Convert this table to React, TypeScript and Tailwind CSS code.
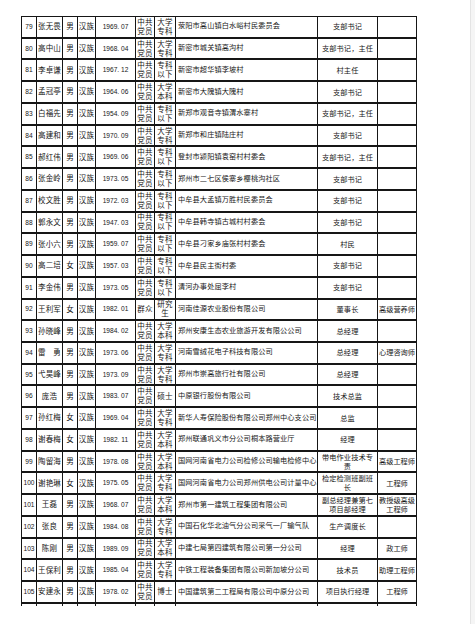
const ROWS: [string, string, string, string, string, string, string, string, string, string][] = [
  ["79", "张无畏", "男", "汉族", "1969. 07", "中共\n党员", "大学\n专科", "荥阳市高山镇白水峪村民委员会", "支部书记", ""],
  ["80", "高中山", "男", "汉族", "1968. 04", "中共\n党员", "大学\n专科", "新密市城关镇高沟村", "支部书记，主任", ""],
  ["81", "李卓谦", "男", "汉族", "1967. 12", "中共\n党员", "专科\n以下", "新密市超华镇李坡村", "村主任", ""],
  ["82", "孟冠亭", "男", "汉族", "1964. 06", "中共\n党员", "大学\n本科", "新密市大隗镇大隗村", "支部书记", ""],
  ["83", "白福先", "男", "汉族", "1954. 09", "中共\n党员", "专科\n以下", "新郑市观音寺镇渭水寨村", "支部书记，主任", ""],
  ["84", "高建和", "男", "汉族", "1970. 09", "中共\n党员", "大学\n专科", "新郑市和庄镇陆庄村", "支部书记", ""],
  ["85", "郝红伟", "男", "汉族", "1969. 06", "中共\n党员", "专科\n以下", "登封市颍阳镇袁窑村村委会", "支部书记，主任", ""],
  ["86", "张金岭", "男", "汉族", "1973. 05", "中共\n党员", "专科\n以下", "郑州市二七区侯寨乡樱桃沟社区", "支部书记", ""],
  ["87", "校文胜", "男", "汉族", "1972. 03", "中共\n党员", "专科\n以下", "中牟县大孟镇万胜村民委员会", "支部书记", ""],
  ["88", "郭永文", "男", "汉族", "1947. 03", "中共\n党员", "专科\n以下", "中牟县韩寺镇古城村村委会", "支部书记", ""],
  ["89", "张小六", "男", "汉族", "1959. 07", "中共\n党员", "专科\n以下", "中牟县刁家乡庙张村村委会", "村民", ""],
  ["90", "高二培", "女", "汉族", "1957. 03", "中共\n党员", "专科\n以下", "中牟县民主街村委", "支部书记", ""],
  ["91", "李金伟", "男", "汉族", "1973. 05", "中共\n党员", "专科\n以下", "清河办事处屈李村", "支部书记", ""],
  ["92", "王利军", "女", "汉族", "1982. 01", "群众", "研究\n生", "河南佳源农业股份有限公司", "董事长", "高级营养师"],
  ["93", "孙晓峰", "男", "汉族", "1984. 02", "中共\n党员", "大学\n本科", "郑州安康生态农业旅游开发有限公公司", "总经理", ""],
  ["94", "雷　勇", "男", "汉族", "1973. 06", "中共\n党员", "大学\n专科", "河南雪绒花电子科技有限公司", "总经理", "心理咨询师"],
  ["95", "弋昊峰", "男", "汉族", "1973. 09", "中共\n党员", "大学\n专科", "郑州市崇高旅行社有限公司", "总经理", ""],
  ["96", "庞浩", "男", "汉族", "1983. 07", "中共\n党员", "硕士", "中原银行股份有限公司", "技术总监", ""],
  ["97", "孙红梅", "女", "汉族", "1969. 04", "中共\n党员", "大学\n专科", "新华人寿保险股份有限公司郑州中心支公司", "总监", ""],
  ["98", "谢春梅", "女", "汉族", "1982. 11", "中共\n党员", "大学\n本科", "郑州联通巩义市分公司桐本路营业厅", "经理", ""],
  ["99", "陶留海", "男", "汉族", "1978. 08", "中共\n党员", "大学\n本科", "国网河南省电力公司检修公司输电检修中心", "带电作业技术专\n责", "高级工程师"],
  ["100", "谢艳琳", "女", "汉族", "1975. 05", "中共\n党员", "大学\n专科", "国网河南省电力公司郑州供电公司计量中心", "检定检测班副班\n长", "工程师"],
  ["101", "王磊", "男", "汉族", "1968. 07", "中共\n党员", "大学\n本科", "郑州市第一建筑工程集团有限公司", "副总经理兼第七\n项目部经理", "教授级高级\n工程师"],
  ["102", "张良", "男", "汉族", "1984. 08", "中共\n党员", "大学\n专科", "中国石化华北油气分公司采气一厂输气队", "生产调度长", ""],
  ["103", "陈刚", "男", "汉族", "1989. 09", "中共\n党员", "大学\n本科", "中建七局第四建筑有限公司第一分公司", "经理", "政工师"],
  ["104", "王保利", "男", "汉族", "1985. 04", "中共\n党员", "大学\n专科", "中铁工程装备集团有限公司新加坡分公司", "技术员", "助理工程师"],
  ["105", "安建永", "男", "汉族", "1978. 02", "中共\n党员", "博士", "中国建筑第二工程局有限公司中原分公司", "项目执行经理", "工程师"],
];

const GRID = "grid grid-cols-[15px_26px_15px_18px_40px_19px_21px_142px_60px_39px]";
const CELL = "flex items-center justify-center border-r border-[#161616] text-center whitespace-pre-line overflow-hidden";

export default function App() {
  return (
    <div
      className="flex w-[475px] h-[624px] bg-white text-[#161616]"
      style={{ fontFamily: '"Liberation Sans", "Noto Sans CJK SC", sans-serif' }}
    >
      <div className="flex-1 pt-[16px] pl-[21px]">
        <div className="w-[396px] border-t border-l border-[#161616]">
          {ROWS.map((r) => (
            <div key={r[0]} className={`${GRID} h-[21.74px] border-b-2 border-[#161616]`}>
              <div className={`${CELL} text-[6.6px]`}>{r[0]}</div>
              <div className={`${CELL} text-[7.5px] tracking-[0.2px]`}>{r[1]}</div>
              <div className={`${CELL} text-[7.5px]`}>{r[2]}</div>
              <div className={`${CELL} text-[7.5px] tracking-[0.2px]`}>{r[3]}</div>
              <div className={`${CELL} text-[6.6px]`}>{r[4]}</div>
              <div className={`${CELL} text-[7.5px] leading-[9px] tracking-[0.2px]`}>{r[5]}</div>
              <div className={`${CELL} text-[7.5px] leading-[9px] tracking-[0.2px]`}>{r[6]}</div>
              <div className="flex items-center justify-start border-r border-[#161616] pl-[2px] text-[7.2px] tracking-[0.1px] whitespace-nowrap overflow-hidden">
                {r[7]}
              </div>
              <div className={`${CELL} text-[7.2px] leading-[9px] tracking-[0.1px]`}>{r[8]}</div>
              <div className={`${CELL} border-r-[1.5px] text-[7.2px] leading-[9px] whitespace-nowrap`}>
                {r[9]}
              </div>
            </div>
          ))}
          <div className={`${GRID} h-[2px]`}>
            {Array.from({ length: 10 }, (_, i) => (
              <div key={i} className="border-r border-[#161616]" />
            ))}
          </div>
        </div>
      </div>
      <div className="w-[5px] border-l border-[#e4e4e4] bg-[#f5f5f5]" />
    </div>
  );
}
